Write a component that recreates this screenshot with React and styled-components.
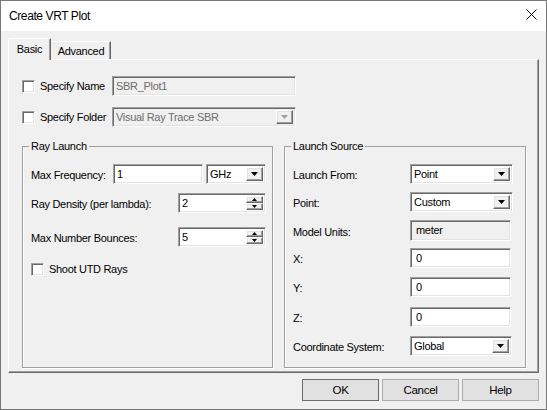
import React from "react";
import styled, { createGlobalStyle, css } from "styled-components";

const GlobalStyle = createGlobalStyle`
  html, body {
    margin: 0;
    padding: 0;
    background: #f0f0f0;
    overflow: hidden;
  }
  * {
    box-sizing: border-box;
  }
`;

const sunken = css`
  border-style: solid;
  border-width: 1px;
  border-color: #a0a0a0 #ffffff #ffffff #a0a0a0;
  box-shadow: inset 1px 1px 0 #696969, inset -1px -1px 0 #e3e3e3;
`;

const raised = css`
  border-style: solid;
  border-width: 1px;
  border-color: #ffffff #696969 #696969 #ffffff;
  box-shadow: inset -1px -1px 0 #a0a0a0, inset 1px 1px 0 #e3e3e3;
  background: #f0f0f0;
`;

function App() {
  return (
    <>
      <GlobalStyle />
      <Window>
        <TitleBar>
          <Title>Create VRT Plot</Title>
          <CloseButton>
            <svg width="11" height="11" viewBox="0 0 11 11">
              <path d="M0.5 0.5 L10.5 10.5 M10.5 0.5 L0.5 10.5" stroke="#000" strokeWidth="1" />
            </svg>
          </CloseButton>
        </TitleBar>
        <Body>
          <TabStrip>
            <Tab $active>Basic</Tab>
            <Tab>Advanced</Tab>
          </TabStrip>
          <TabPanel>
            <OptionRow>
              <CheckBox />
              <CheckLabel $width={72}>Specify Name</CheckLabel>
              <TextBox $width={184} $disabled>SBR_Plot1</TextBox>
            </OptionRow>
            <OptionRow $mt={11}>
              <CheckBox />
              <CheckLabel $width={72}>Specify Folder</CheckLabel>
              <Combo width={184} disabled value="Visual Ray Trace SBR" />
            </OptionRow>
            <GroupRow>
              <GroupBox $width={251}>
                <Legend>Ray Launch</Legend>
                <LaunchRow>
                  <FieldLabel $width={82}>Max Frequency:</FieldLabel>
                  <TextBox $width={90}>1</TextBox>
                  <Combo width={60} value="GHz" gap />
                </LaunchRow>
                <LaunchRow $mt={9}>
                  <FieldLabel $grow>Ray Density (per lambda):</FieldLabel>
                  <Spin value="2" />
                </LaunchRow>
                <LaunchRow $mt={14}>
                  <FieldLabel $grow>Max Number Bounces:</FieldLabel>
                  <Spin value="5" />
                </LaunchRow>
                <LaunchRow $mt={15} $short>
                  <CheckBox />
                  <CheckLabel>Shoot UTD Rays</CheckLabel>
                </LaunchRow>
              </GroupBox>
              <GroupBox $width={242}>
                <Legend>Launch Source</Legend>
                <SourceRow>
                  <FieldLabel>Launch From:</FieldLabel>
                  <Combo width={103} value="Point" />
                </SourceRow>
                <SourceRow $mt={8}>
                  <FieldLabel>Point:</FieldLabel>
                  <Combo width={103} value="Custom" />
                </SourceRow>
                <SourceRow $mt={8}>
                  <FieldLabel>Model Units:</FieldLabel>
                  <ReadOnlyBox>meter</ReadOnlyBox>
                </SourceRow>
                <SourceRow $mt={8}>
                  <FieldLabel>X:</FieldLabel>
                  <TextBox $width={101} $pad={5}>0</TextBox>
                </SourceRow>
                <SourceRow $mt={9}>
                  <FieldLabel>Y:</FieldLabel>
                  <TextBox $width={101} $pad={5}>0</TextBox>
                </SourceRow>
                <SourceRow $mt={10}>
                  <FieldLabel>Z:</FieldLabel>
                  <TextBox $width={101} $pad={5}>0</TextBox>
                </SourceRow>
                <SourceRow $mt={9}>
                  <FieldLabel>Coordinate System:</FieldLabel>
                  <Combo width={102} value="Global" />
                </SourceRow>
              </GroupBox>
            </GroupRow>
          </TabPanel>
          <ButtonBar>
            <Button $default>OK</Button>
            <Button>Cancel</Button>
            <Button>Help</Button>
          </ButtonBar>
        </Body>
      </Window>
    </>
  );
}

function Arrow({ disabled }) {
  return (
    <svg width="7" height="4" viewBox="0 0 7 4">
      <polygon points="0,0 7,0 3.5,4" fill={disabled ? "#a0a0a0" : "#000"} />
    </svg>
  );
}

function Combo({ width, value, disabled, gap }) {
  return (
    <ComboBox $width={width} $disabled={disabled} $gap={gap}>
      <ComboText>{value}</ComboText>
      <ArrowButton>
        <Arrow disabled={disabled} />
      </ArrowButton>
    </ComboBox>
  );
}

function Spin({ value }) {
  return (
    <SpinBox>
      <ComboText>{value}</ComboText>
      <SpinButtons>
        <SpinButton>
          <svg width="5" height="3" viewBox="0 0 5 3">
            <polygon points="2.5,0 5,3 0,3" fill="#000" />
          </svg>
        </SpinButton>
        <SpinButton>
          <svg width="5" height="3" viewBox="0 0 5 3">
            <polygon points="0,0 5,0 2.5,3" fill="#000" />
          </svg>
        </SpinButton>
      </SpinButtons>
    </SpinBox>
  );
}

const Window = styled.div`
  width: 547px;
  height: 410px;
  border: 1px solid #777777;
  display: flex;
  flex-direction: column;
  background: #f0f0f0;
  font-family: "Liberation Sans", Arial, sans-serif;
  font-size: 11px;
  letter-spacing: -0.3px;
  color: #000;
`;

const TitleBar = styled.div`
  height: 30px;
  background: #ffffff;
  display: flex;
  align-items: center;
  justify-content: space-between;
  padding: 0 9px 0 8px;
`;

const Title = styled.div`
  font-size: 12px;
  letter-spacing: -0.4px;
  padding-bottom: 1px;
`;

const CloseButton = styled.div`
  width: 11px;
  height: 11px;
  display: flex;
  margin-bottom: 3px;
`;

const Body = styled.div`
  flex: 1;
  display: flex;
  flex-direction: column;
  padding: 7px 7px 0 7px;
`;

const TabStrip = styled.div`
  display: flex;
  align-items: flex-end;
  height: 21px;
`;

const Tab = styled.div`
  position: relative;
  background: #f0f0f0;
  display: flex;
  align-items: center;
  justify-content: center;
  border-style: solid;
  border-width: 1px 1px 0 1px;
  border-color: #ffffff #696969 transparent #ffffff;
  box-shadow: inset -1px 0 0 #a0a0a0;
  ${(p) =>
    p.$active
      ? css`
          width: 43px;
          height: 22px;
          margin-bottom: -1px;
          z-index: 1;
          padding-bottom: 2px;
        `
      : css`
          width: 60px;
          height: 18px;
          border-left-color: transparent;
          padding-top: 1px;
        `}
`;

const TabPanel = styled.div`
  height: 314px;
  display: flex;
  flex-direction: column;
  padding: 16px 0 3px 13px;
  border-style: solid;
  border-width: 1px;
  border-color: #ffffff #696969 #696969 #ffffff;
  box-shadow: inset -1px -1px 0 #a0a0a0;
`;

const OptionRow = styled.div`
  display: flex;
  align-items: center;
  height: 20px;
  margin-top: ${(p) => p.$mt || 0}px;
`;

const CheckBox = styled.div`
  width: 13px;
  height: 13px;
  flex: none;
  background: #ffffff;
  ${sunken}
`;

const CheckLabel = styled.div`
  margin-left: 5px;
  width: ${(p) => (p.$width ? `${p.$width}px` : "auto")};
  white-space: nowrap;
`;

const TextBox = styled.div`
  width: ${(p) => p.$width}px;
  height: 20px;
  flex: none;
  display: flex;
  align-items: center;
  padding: 0 ${(p) => p.$pad || 3}px;
  white-space: nowrap;
  background: ${(p) => (p.$disabled ? "#f0f0f0" : "#ffffff")};
  color: ${(p) => (p.$disabled ? "#6d6d6d" : "#000")};
  ${sunken}
`;

const ComboBox = styled.div`
  width: ${(p) => p.$width}px;
  height: 20px;
  flex: none;
  display: flex;
  align-items: stretch;
  padding: 2px;
  background: ${(p) => (p.$disabled ? "#f0f0f0" : "#ffffff")};
  color: ${(p) => (p.$disabled ? "#6d6d6d" : "#000")};
  margin-left: ${(p) => (p.$gap ? "3px" : "0")};
  ${sunken}
`;

const ComboText = styled.div`
  flex: 1;
  display: flex;
  align-items: center;
  padding-left: 1px;
  white-space: nowrap;
  overflow: hidden;
`;

const ArrowButton = styled.div`
  width: 17px;
  flex: none;
  display: flex;
  align-items: center;
  justify-content: center;
  ${raised}
`;

const SpinBox = styled.div`
  width: 88px;
  height: 20px;
  flex: none;
  display: flex;
  padding: 2px;
  background: #ffffff;
  ${sunken}
`;

const SpinButtons = styled.div`
  width: 17px;
  display: flex;
  flex-direction: column;
`;

const SpinButton = styled.div`
  flex: 1;
  display: flex;
  align-items: center;
  justify-content: center;
  ${raised}
`;

const GroupRow = styled.div`
  display: flex;
  gap: 11px;
  height: 228px;
  margin-top: 13px;
`;

const GroupBox = styled.fieldset`
  width: ${(p) => p.$width}px;
  margin: 0;
  padding: 11px 6px 0 8px;
  border: 1px solid #a0a0a0;
  box-shadow: inset 1px 0 0 #fff, 1px 1px 0 #fff;
  display: flex;
  flex-direction: column;
  min-width: 0;
`;

const Legend = styled.legend`
  padding: 0 2px;
  margin-left: -2px;
  line-height: 13px;
`;

const LaunchRow = styled.div`
  display: flex;
  align-items: center;
  height: ${(p) => (p.$short ? 14 : 20)}px;
  margin-top: ${(p) => p.$mt || 0}px;
`;

const SourceRow = styled.div`
  display: grid;
  grid-template-columns: 117px auto;
  align-items: center;
  height: 20px;
  margin-top: ${(p) => p.$mt || 0}px;
`;

const FieldLabel = styled.div`
  white-space: nowrap;
  padding-top: 2px;
  width: ${(p) => (p.$width ? `${p.$width}px` : "auto")};
  flex: ${(p) => (p.$grow ? 1 : "none")};
`;

const ReadOnlyBox = styled.div`
  width: 101px;
  height: 21px;
  padding: 3px 0 0 5px;
  background: #f0f0f0;
  ${sunken}
`;

const ButtonBar = styled.div`
  display: flex;
  justify-content: flex-end;
  gap: 3px;
  margin-top: 6px;
`;

const Button = styled.div`
  width: 77px;
  height: 22px;
  display: flex;
  align-items: center;
  justify-content: center;
  background: #e1e1e1;
  border: 1px solid ${(p) => (p.$default ? "#6a6a6a" : "#adadad")};
  font-size: 11.5px;
  letter-spacing: -0.3px;
`;

export default App;
